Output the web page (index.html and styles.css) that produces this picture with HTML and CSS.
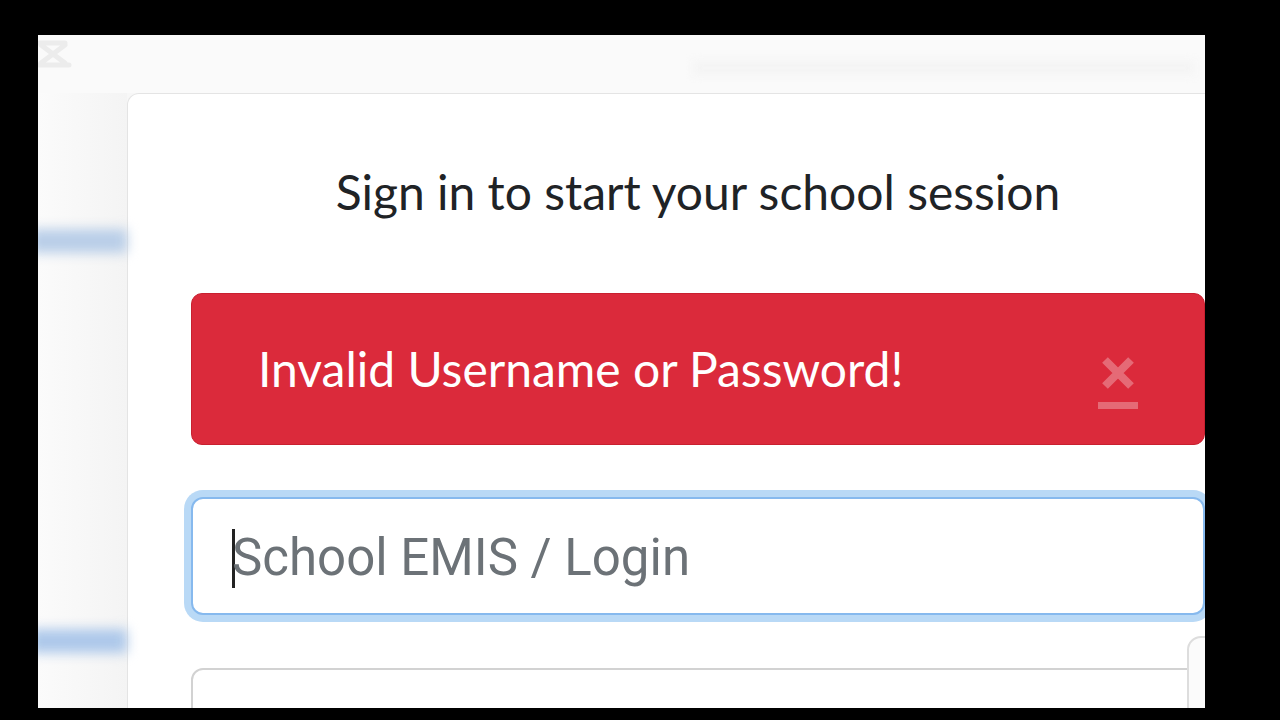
FILE: index.html
```html
<!DOCTYPE html>
<html lang="en">
<head>
<meta charset="utf-8">
<title>School Login</title>
<link rel="stylesheet" href="styles.css">
</head>
<body>
<div class="screen">
  <div class="page">
    <div class="topbar">
      <svg class="menu-icon" width="38" height="32" viewBox="0 0 38 32">
        <path d="M4 4 H30 M6 6 L30 24 M30 6 L6 24 M4 26 H34" stroke="#ececec" stroke-width="5" stroke-linecap="round" fill="none"/>
      </svg>
      <div class="topbar-blur"></div>
    </div>
    <div class="main">
      <div class="sidebar">
        <div class="side-bar side-bar-1"></div>
        <div class="side-bar side-bar-2"></div>
      </div>
      <div class="card">
        <h1 class="title">Sign in to start your school session</h1>
        <div class="alert">
          <span class="alert-text">Invalid Username or Password!</span>
          <button class="alert-close" type="button" aria-label="Close">
            <svg width="36" height="36" viewBox="0 0 36 36">
              <path d="M5 5 L31 31 M31 5 L5 31" stroke="#ffffff" stroke-width="8" fill="none"/>
            </svg>
            <span class="close-line"></span>
          </button>
        </div>
        <div class="field field-focus">
          <span class="caret"></span>
          <span class="placeholder">School EMIS / Login</span>
        </div>
        <div class="field-wrap">
          <div class="field field-next"></div>
          <div class="side-toggle"></div>
        </div>
      </div>
    </div>
  </div>
</div>
</body>
</html>
```

FILE: styles.css
```css
html, body {
  margin: 0;
  padding: 0;
  background: #000;
}

.screen {
  width: 1280px;
  height: 720px;
  box-sizing: border-box;
  padding: 35px 75px 12px 38px;
  overflow: hidden;
}

.page {
  height: 100%;
  background: #f7f7f7;
  display: flex;
  flex-direction: column;
  overflow: hidden;
}

.topbar {
  height: 58px;
  flex-shrink: 0;
  background: #fafafa;
  display: flex;
  align-items: flex-start;
  padding-top: 4px;
  box-sizing: border-box;
}

.menu-icon {
  margin-left: -3px;
  flex-shrink: 0;
}

.topbar-blur {
  flex: 1;
  height: 14px;
  margin: 22px 10px 0 620px;
  background: #f4f4f4;
  filter: blur(5px);
}

.main {
  flex: 1;
  min-height: 0;
  display: flex;
}

.sidebar {
  width: 89px;
  flex-shrink: 0;
  background: linear-gradient(to right, #fbfbfb, #f4f4f4);
  display: flex;
  flex-direction: column;
}

.side-bar {
  height: 24px;
  background: #b9cee8;
  filter: blur(6px);
  margin-left: -8px;
}

.side-bar-1 {
  margin-top: 136px;
}

.side-bar-2 {
  margin-top: 376px;
  background: #adc8ea;
}

.card {
  width: 1142px;
  flex-shrink: 0;
  box-sizing: border-box;
  background: #fff;
  border: 1px solid #e4e4e4;
  border-bottom: none;
  border-radius: 12px 12px 0 0;
  padding: 69px 63px 0;
}

.title {
  margin: 0;
  font-family: "Lato", "Open Sans", sans-serif;
  font-weight: 400;
  font-size: 48px;
  line-height: 58px;
  text-align: center;
  color: #1f2326;
}

.alert {
  margin-top: 72px;
  height: 152px;
  box-sizing: border-box;
  background: #db2a3b;
  border: 1px solid #c8202f;
  border-radius: 11px;
  display: flex;
  align-items: center;
  justify-content: space-between;
  padding: 0 66px;
}

.alert-text {
  font-family: "Lato", "Open Sans", sans-serif;
  font-size: 48px;
  color: #fff;
  margin-top: -2px;
}

.alert-close {
  background: none;
  border: none;
  padding: 0;
  margin-top: 26px;
  display: flex;
  flex-direction: column;
  align-items: center;
  gap: 11px;
  opacity: 0.3;
  width: 40px;
}

.close-line {
  display: block;
  width: 40px;
  height: 7px;
  background: #fff;
}

.field {
  box-sizing: border-box;
  border-radius: 12px;
  background: #fff;
}

.field-focus {
  margin-top: 52px;
  height: 118px;
  border: 2px solid #86b9ee;
  box-shadow: 0 0 0 7px #b9d9f6;
  display: flex;
  align-items: center;
  padding-left: 39px;
}

.caret {
  width: 3px;
  height: 59px;
  background: #222;
  flex-shrink: 0;
  margin-right: -3px;
  margin-top: 4px;
}

.placeholder {
  font-family: "Roboto", "Liberation Sans", sans-serif;
  font-size: 51px;
  color: #6c7277;
  margin-top: 2px;
}

.field-wrap {
  position: relative;
  margin-top: 53px;
}

.field-next {
  height: 118px;
  border: 2px solid #d2d2d2;
}

.side-toggle {
  position: absolute;
  left: 996px;
  top: -32px;
  width: 60px;
  height: 120px;
  box-sizing: border-box;
  border: 2px solid #dddddd;
  border-radius: 14px;
  background: #fbfbfb;
}
```
